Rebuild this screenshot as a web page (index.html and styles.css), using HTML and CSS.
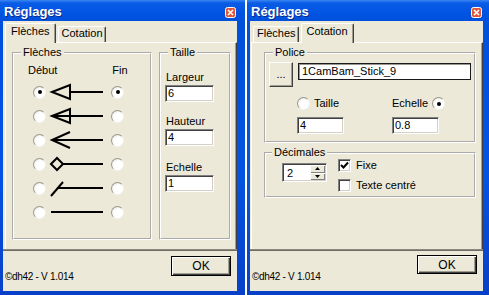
FILE: index.html
```html
<!DOCTYPE html>
<html lang="fr">
<head>
    <meta charset="UTF-8">
    <title>Réglages</title>
    <link rel="stylesheet" href="styles.css">
</head>
<body>
<div class="desktop">

    <!-- fenêtre 1 : onglet Flèches -->
    <div class="window win-left">
        <div class="titlebar">
            <span class="title">Réglages</span>
            <span class="close"><svg width="11" height="11" viewBox="0 0 11 11"><rect x="0.5" y="0.5" width="10" height="10" rx="2" fill="#e1573a" stroke="#fff"/><path d="M3 3 L8 8 M8 3 L3 8" stroke="#fff" stroke-width="1.6"/></svg></span>
        </div>
        <div class="client">
            <div class="tabs">
                <div class="tab active">Flèches</div>
                <div class="tab">Cotation</div>
            </div>
            <div class="pane">
                <fieldset class="group grp-fleches">
                    <legend>Flèches</legend>
                    <div class="heads"><span>Début</span><span>Fin</span></div>
                    <div class="arrow-row">
                        <span class="radio checked"></span>
                        <svg width="62" height="24" viewBox="0 0 62 24"><polygon points="3,12 21,5 21,19" fill="none" stroke="#000" stroke-width="2"/><line x1="21" y1="12" x2="54" y2="12" stroke="#000" stroke-width="2"/></svg>
                        <span class="radio checked"></span>
                    </div>
                    <div class="arrow-row">
                        <span class="radio"></span>
                        <svg width="62" height="24" viewBox="0 0 62 24"><polygon points="3,12 21,5 21,19" fill="none" stroke="#000" stroke-width="2"/><line x1="4" y1="12" x2="54" y2="12" stroke="#000" stroke-width="2"/></svg>
                        <span class="radio"></span>
                    </div>
                    <div class="arrow-row">
                        <span class="radio"></span>
                        <svg width="62" height="24" viewBox="0 0 62 24"><polyline points="21,4 3,12 21,20" fill="none" stroke="#000" stroke-width="2"/><line x1="3" y1="12" x2="54" y2="12" stroke="#000" stroke-width="2"/></svg>
                        <span class="radio"></span>
                    </div>
                    <div class="arrow-row">
                        <span class="radio"></span>
                        <svg width="62" height="24" viewBox="0 0 62 24"><polygon points="2,12 8,6 14,12 8,18" fill="none" stroke="#000" stroke-width="2"/><line x1="14" y1="12" x2="54" y2="12" stroke="#000" stroke-width="2"/></svg>
                        <span class="radio"></span>
                    </div>
                    <div class="arrow-row">
                        <span class="radio"></span>
                        <svg width="62" height="24" viewBox="0 0 62 24"><line x1="2" y1="20" x2="14" y2="6" stroke="#000" stroke-width="2"/><line x1="8" y1="12" x2="54" y2="12" stroke="#000" stroke-width="2"/></svg>
                        <span class="radio"></span>
                    </div>
                    <div class="arrow-row">
                        <span class="radio"></span>
                        <svg width="62" height="24" viewBox="0 0 62 24"><line x1="2" y1="12" x2="54" y2="12" stroke="#000" stroke-width="2"/></svg>
                        <span class="radio"></span>
                    </div>
                </fieldset>
                <fieldset class="group grp-taille">
                    <legend>Taille</legend>
                    <div class="label lbl-first">Largeur</div>
                    <div class="textbox">6</div>
                    <div class="label lbl-second">Hauteur</div>
                    <div class="textbox">4</div>
                    <div class="label lbl-third">Echelle</div>
                    <div class="textbox">1</div>
                </fieldset>
            </div>
            <div class="footer">
                <span class="credit">©dh42 - V 1.014</span>
                <span class="btn btn-ok">OK</span>
            </div>
        </div>
    </div>

    <!-- fenêtre 2 : onglet Cotation -->
    <div class="window win-right">
        <div class="titlebar">
            <span class="title">Réglages</span>
            <span class="close"><svg width="11" height="11" viewBox="0 0 11 11"><rect x="0.5" y="0.5" width="10" height="10" rx="2" fill="#e1573a" stroke="#fff"/><path d="M3 3 L8 8 M8 3 L3 8" stroke="#fff" stroke-width="1.6"/></svg></span>
        </div>
        <div class="client">
            <div class="tabs">
                <div class="tab">Flèches</div>
                <div class="tab active">Cotation</div>
            </div>
            <div class="pane pane-col">
                <fieldset class="group grp-police">
                    <legend>Police</legend>
                    <div class="font-row">
                        <span class="btn btn-dots">...</span>
                        <div class="textbox font-name">1CamBam_Stick_9</div>
                    </div>
                    <div class="size-grid">
                        <label class="opt"><span class="radio"></span>Taille</label>
                        <label class="opt">Echelle<span class="radio checked"></span></label>
                        <div class="textbox small">4</div>
                        <div class="textbox small">0.8</div>
                    </div>
                </fieldset>
                <fieldset class="group grp-dec">
                    <legend>Décimales</legend>
                    <div class="dec-row">
                        <div class="spinner">
                            <span class="spin-val">2</span>
                            <span class="spin-btns">
                                <span class="spin-btn"><svg width="5" height="3" viewBox="0 0 5 3"><path d="M2.5 0 L5 3 L0 3 Z" fill="#000"/></svg></span>
                                <span class="spin-btn"><svg width="5" height="3" viewBox="0 0 5 3"><path d="M0 0 L5 0 L2.5 3 Z" fill="#000"/></svg></span>
                            </span>
                        </div>
                        <div class="checks">
                            <label class="check-line"><span class="checkbox"><svg width="9" height="9" viewBox="0 0 9 9"><path d="M1 4 L3.5 6.5 L8 1.5" fill="none" stroke="#000" stroke-width="2"/></svg></span>Fixe</label>
                            <label class="check-line"><span class="checkbox"></span>Texte centré</label>
                        </div>
                    </div>
                </fieldset>
            </div>
            <div class="footer">
                <span class="credit">©dh42 - V 1.014</span>
                <span class="btn btn-ok">OK</span>
            </div>
        </div>
    </div>

</div>
</body>
</html>
```

FILE: styles.css
```css
body {
    margin: 0;
    background: #fff;
    font-family: "Liberation Sans", Arial, sans-serif;
    font-size: 11px;
    color: #000;
}

.desktop {
    display: flex;
    gap: 2px;
    height: 295px;
    overflow: hidden;
}

/* cadre bleu façon XP */
.window {
    display: flex;
    flex-direction: column;
    box-sizing: border-box;
    height: 295px;
    padding: 0 8px 4px 3px;
    background: linear-gradient(#3a86f2 0, #0a5ce6 3px, #0055e3 12px, #0050dc 21px, #0553e2 60%, #0840c8 100%);
}

.win-left {
    width: 245px;
}

.win-right {
    width: 242px;
    padding-right: 6px;
}

.titlebar {
    display: flex;
    justify-content: space-between;
    height: 21px;
    box-sizing: border-box;
    padding: 4px 1px 0 1px;
}

.title {
    color: #fff;
    font-weight: bold;
    font-size: 13px;
    line-height: 16px;
    text-shadow: 1px 1px 0 #0a2a8a;
}

.close {
    margin-top: 3px;
    height: 11px;
}

.close svg {
    display: block;
}

.client {
    flex: 1;
    display: flex;
    flex-direction: column;
    background: #ece9d8;
}

/* onglets */
.tabs {
    display: flex;
    align-items: flex-end;
    height: 21px;
    padding-left: 2px;
    position: relative;
    z-index: 1;
}

.win-right .tabs {
    padding-left: 1px;
}

.tab {
    box-sizing: border-box;
    height: 16px;
    margin-left: 2px;
    padding: 0 2px 0 3px;
    line-height: 13px;
    border: 1px solid;
    border-color: #fff #404040 transparent #fff;
    border-bottom: 0;
    box-shadow: inset -1px 0 #a09e93;
    border-radius: 2px 2px 0 0;
}

.tab.active {
    height: 20px;
    margin-bottom: -1px;
    padding: 1px 5px 0 5px;
    background: #ece9d8;
}

.tab.active:first-child {
    margin-left: 0;
}

.pane {
    flex: 1;
    display: flex;
    gap: 7px;
    margin-left: 2px;
    padding: 3px 0 9px 6px;
    border-top: 1px solid #fff;
    border-left: 1px solid #fff;
    border-right: 1px solid #404040;
    box-shadow: inset -1px 0 #a09e93;
}

.win-right .pane {
    margin-left: 1px;
}

.pane-col {
    flex-direction: column;
    gap: 3px;
    padding: 3px 6px 0 12px;
}

/* cadres de groupe */
.group {
    margin: 0;
    padding: 0;
    border: 2px groove #fff;
    min-width: 0;
}

.group legend {
    padding: 0 2px;
    margin-left: 7px;
    line-height: 13px;
}

.grp-fleches {
    width: 140px;
    box-sizing: border-box;
}

.grp-taille {
    width: 72px;
    box-sizing: border-box;
}

.heads {
    display: flex;
    gap: 55px;
    padding: 5px 0 0 14px;
    line-height: 13px;
}

.arrow-row {
    display: flex;
    align-items: center;
    height: 24px;
    padding-left: 19px;
}

.arrow-row:nth-child(3) {
    margin-top: 3px;
}

.arrow-row svg {
    display: block;
    margin-left: 3px;
}

/* boutons radio et cases */
.radio {
    display: inline-block;
    position: relative;
    box-sizing: border-box;
    width: 13px;
    height: 13px;
    border-radius: 50%;
    border: 1px solid;
    border-color: #9a988e #f4f3ee #f4f3ee #9a988e;
    background: radial-gradient(circle at 60% 60%, #fff 45%, #e4e2d8 100%);
}

.radio.checked::after {
    content: "";
    position: absolute;
    left: 3.5px;
    top: 3.5px;
    width: 4px;
    height: 4px;
    border-radius: 50%;
    background: #000;
}

.checkbox {
    display: inline-block;
    box-sizing: border-box;
    width: 13px;
    height: 13px;
    border: 1px solid;
    border-color: #808080 #fff #fff #808080;
    box-shadow: inset 1px 1px #404040, inset -1px -1px #d4d0c8;
    background: #fff;
    padding: 1px 0 0 1px;
}

.checkbox svg {
    display: block;
}

/* zones de texte */
.label {
    margin-left: 5px;
    line-height: 13px;
}

.lbl-first {
    margin-top: 12px;
}

.lbl-second {
    margin-top: 13px;
}

.lbl-third {
    margin-top: 15px;
}

.textbox {
    box-sizing: border-box;
    width: 49px;
    height: 17px;
    margin: 1px 0 0 4px;
    padding: 1px 0 0 2px;
    line-height: 13px;
    background: #fff;
    border: 1px solid;
    border-color: #808080 #fff #fff #808080;
    box-shadow: inset 1px 1px #404040, inset -1px -1px #d4d0c8;
}

/* boutons */
.btn {
    display: flex;
    align-items: center;
    justify-content: center;
    box-sizing: border-box;
    background: #ece9d8;
    border: 1px solid;
    border-color: #fff #404040 #404040 #fff;
    box-shadow: inset -1px -1px #a09e93;
}

.btn-ok {
    width: 60px;
    height: 20px;
    margin: 6px 6px 0 0;
    border: 1px solid #000;
    box-shadow: inset 1px 1px #fff, inset -1px -1px #404040, inset -2px -2px #a09e93;
    font-size: 12px;
}

.btn-dots {
    width: 24px;
    height: 25px;
    align-items: flex-end;
    padding-bottom: 6px;
}

.footer {
    display: flex;
    justify-content: space-between;
    align-items: flex-start;
    height: 42px;
    box-sizing: border-box;
    border-top: 1px solid #8c8a80;
    box-shadow: inset 0 1px #6e6c64;
}

.win-right .footer .btn-ok {
    margin-top: 5px;
    height: 19px;
}

.credit {
    margin: 21px 0 0 2px;
    font-size: 10px;
    line-height: 12px;
    letter-spacing: -0.3px;
}

/* onglet Cotation */
.grp-police {
    width: 212px;
    box-sizing: border-box;
    padding-bottom: 7px;
}

.font-row {
    display: flex;
    align-items: flex-start;
    padding: 3px 0 0 3px;
}

.textbox.font-name {
    width: 173px;
    margin: 1px 0 0 5px;
    padding-left: 3px;
    border: 1px solid #1a1a1a;
    box-shadow: inset 1px 1px #9a988e;
}

.size-grid {
    display: grid;
    grid-template-columns: 95px auto;
    row-gap: 7px;
    padding: 10px 0 0 31px;
}

.size-grid .textbox.small {
    width: 47px;
    margin: 0;
}

.opt {
    display: flex;
    align-items: center;
    gap: 4px;
    line-height: 13px;
}

.grp-dec {
    width: 212px;
    box-sizing: border-box;
    padding-bottom: 4px;
}

.grp-dec legend {
    margin-left: 6px;
}

.dec-row {
    display: flex;
    align-items: flex-start;
    padding-left: 16px;
}

.spinner {
    display: flex;
    box-sizing: border-box;
    width: 45px;
    height: 19px;
    margin-top: 4px;
    background: #fff;
    border: 1px solid;
    border-color: #808080 #fff #fff #808080;
    box-shadow: inset 1px 1px #404040, inset -1px -1px #d4d0c8;
    padding: 1px 1px 1px 1px;
}

.spin-val {
    flex: 1;
    padding: 2px 0 0 3px;
    line-height: 13px;
}

.spin-btns {
    display: flex;
    flex-direction: column;
    width: 15px;
}

.spin-btn {
    flex: 1;
    display: flex;
    align-items: center;
    justify-content: center;
    background: #ece9d8;
    box-shadow: inset 1px 1px #fff, inset -1px -1px #808080;
}

.spin-btn svg {
    display: block;
}

.checks {
    display: flex;
    flex-direction: column;
    gap: 7px;
    margin-left: 11px;
}

.check-line {
    display: flex;
    align-items: center;
    gap: 5px;
    line-height: 13px;
}
```
